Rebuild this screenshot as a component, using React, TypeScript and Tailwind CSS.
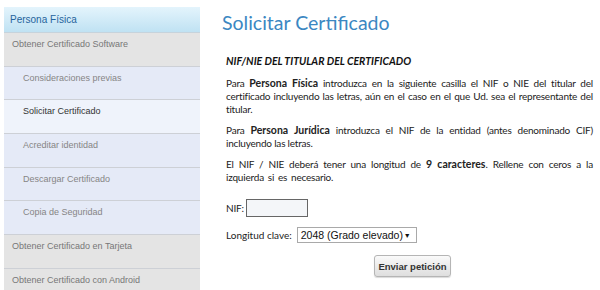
const items = [
  { label: "Obtener Certificado Software", kind: "top" },
  { label: "Consideraciones previas", kind: "sub" },
  { label: "Solicitar Certificado", kind: "active" },
  { label: "Acreditar identidad", kind: "sub" },
  { label: "Descargar Certificado", kind: "sub" },
  { label: "Copia de Seguridad", kind: "sub" },
  { label: "Obtener Certificado en Tarjeta", kind: "top" },
  { label: "Obtener Certificado con Android", kind: "top" },
];

function SideItem({ label, kind }: { label: string; kind: string }) {
  const base = "h-[33.7px] shrink-0 border-b border-[#cdd0d6] pt-[5px] leading-[12px] text-[9px]";
  if (kind === "top") {
    return <div className={`${base} bg-[#e4e4e4] pl-[8px] text-[#777777]`}>{label}</div>;
  }
  if (kind === "active") {
    return <div className={`${base} bg-[#eff3fb] pl-[19px] text-[#333333]`}>{label}</div>;
  }
  return <div className={`${base} bg-[#e5eaf7] pl-[19px] text-[#858585]`}>{label}</div>;
}

function B({ children }: { children: React.ReactNode }) {
  return <b className="text-[10.5px] leading-[13px] tracking-normal">{children}</b>;
}

export default function App() {
  return (
    <div className="flex h-[290px] w-[600px] overflow-hidden bg-white font-['Liberation_Sans',Arial,sans-serif]">
      {/* Sidebar */}
      <div className="ml-[4px] mt-[7px] flex w-[196px] shrink-0 flex-col">
        <div className="flex h-[26px] shrink-0 items-center border-b border-[#c6d3dc] bg-gradient-to-b from-[#e4f4fc] to-[#bfe2f3] pl-[6px] text-[10px] text-[#25649c]">
          Persona Física
        </div>
        {items.map((it) => (
          <SideItem key={it.label} label={it.label} kind={it.kind} />
        ))}
      </div>

      {/* Content */}
      <div className="ml-[22px] w-[371px] font-['Lato',sans-serif] text-[#222]">
        <h1 className="mt-[10px] text-[19.5px] leading-[25px] font-normal text-[#3b87c2]">Solicitar Certificado</h1>

        <div className="mt-[20px] pl-[4px] text-[10px] leading-[13px] tracking-[-0.2px]">
          <p className="text-[10.5px] font-bold italic tracking-normal text-[#111]">NIF/NIE DEL TITULAR DEL CERTIFICADO</p>

          <p className="mt-[9px] text-justify">
            Para <B>Persona Física</B> introduzca en la siguiente casilla el NIF o NIE del titular del certificado incluyendo las letras, aún en el caso en el que Ud. sea el representante del titular.
          </p>

          <p className="mt-[8px] text-justify">
            Para <B>Persona Jurídica</B> introduzca el NIF de la entidad (antes denominado CIF) incluyendo las letras.
          </p>

          <p className="mt-[8px] text-justify [word-spacing:1.5px]">
            El NIF / NIE deberá tener una longitud de <B>9 caracteres</B>. Rellene con ceros a la izquierda si es necesario.
          </p>

          <div className="mt-[15px] flex items-center">
            <span>NIF:</span>
            <input className="ml-[2px] h-[18px] w-[62px] border border-[#666] bg-[#f4f6f9] outline-none" />
          </div>

          <div className="mt-[10px] flex items-center">
            <span className="tracking-normal">Longitud clave:</span>
            <div className="ml-[5px] flex h-[16px] w-[120px] items-center justify-between whitespace-nowrap border border-[#a9a9a9] bg-white pl-[3px] pr-[5px] font-['Liberation_Sans',Arial,sans-serif] text-[10.5px] tracking-normal text-[#111]">
              <span>2048 (Grado elevado)</span>
              <span className="text-[7px]">▼</span>
            </div>
          </div>

          <div className="mt-[12px] flex justify-center pl-[6px]">
            <button className="h-[22px] w-[77px] whitespace-nowrap rounded-[3px] border border-[#b5b5b5] bg-gradient-to-b from-[#fafafa] to-[#dedede] font-['Liberation_Sans',Arial,sans-serif] text-[9.5px] font-bold tracking-normal text-[#333] shadow-[0_1px_1px_rgba(0,0,0,0.15)]">
              Enviar petición
            </button>
          </div>
        </div>
      </div>
    </div>
  );
}
